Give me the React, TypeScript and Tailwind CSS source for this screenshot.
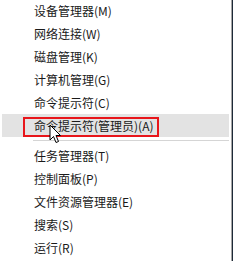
const items = [
	"设备管理器(M)",
	"网络连接(W)",
	"磁盘管理(K)",
	"计算机管理(G)",
	"命令提示符(C)",
	"命令提示符(管理员)(A)",
];

const items2 = [
	"任务管理器(T)",
	"控制面板(P)",
	"文件资源管理器(E)",
	"搜索(S)",
	"运行(R)",
];

function Row({ label, active }: { label: string; active?: boolean }) {
	return (
		<div
			className={
				"relative h-[23px] flex items-center pl-[32px] text-[12px] text-[#1a1a1a] " +
				(active ? "bg-[#e3e3e3]" : "")
			}
		>
			<span>{label}</span>
			{active && (
				<>
					<div className="absolute left-[21px] top-[3px] w-[136px] h-[20px] border-2 border-[#e8161b]" />
					<svg
						className="absolute left-[47px] top-[10px]"
						width="13"
						height="20"
						viewBox="0 0 13 20"
					>
						<path
							d="M1 1 L1 16 L4.5 12.5 L7 18.5 L9.5 17.5 L7 11.5 L11.5 11.5 Z"
							fill="#fff"
							stroke="#000"
							strokeWidth="1"
							strokeLinejoin="miter"
						/>
					</svg>
				</>
			)}
		</div>
	);
}

export default function App() {
	return (
		<div
			className="w-[233px] h-[261px] flex bg-white overflow-hidden"
			style={{ fontFamily: '"Noto Sans CJK SC", "Liberation Sans", sans-serif' }}
		>
			<div className="flex-1 flex flex-col px-[2px] -mt-px">
				{items.map((label, i) => (
					<Row key={i} label={label} active={i === 5} />
				))}
				<div className="h-[7px] flex items-center pl-[31px]">
					<div className="h-px w-full bg-[#d5d5d5]" />
				</div>
				{items2.map((label, i) => (
					<Row key={i} label={label} />
				))}
			</div>
			<div className="w-px bg-[#a6a6a6]" />
			<div className="w-px bg-[#1d2a38]" />
		</div>
	);
}
